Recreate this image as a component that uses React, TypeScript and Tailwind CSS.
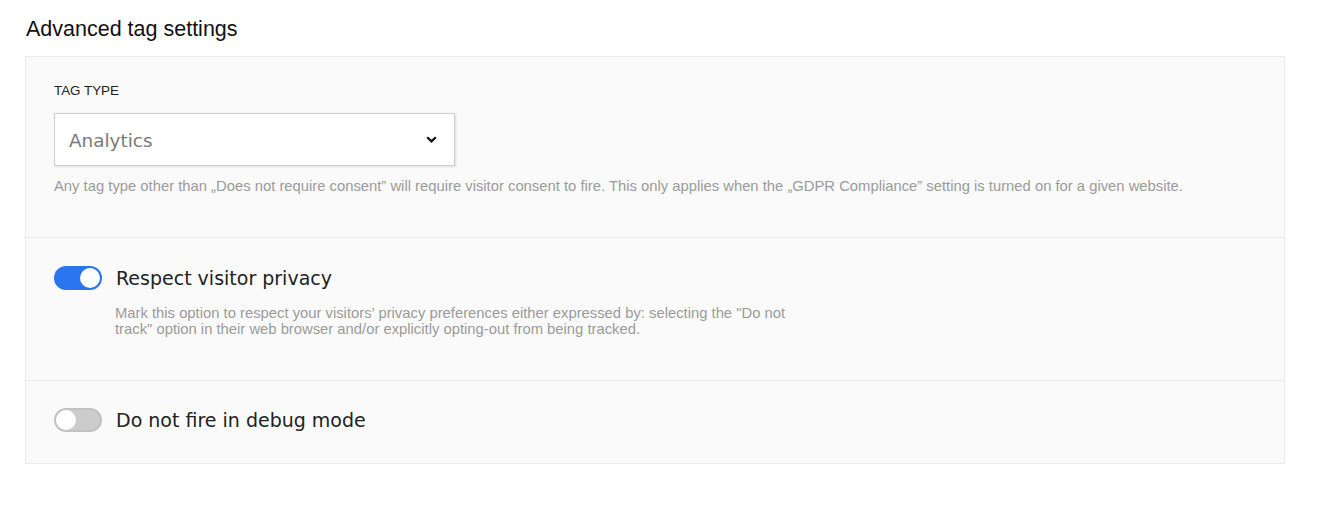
import React from "react";

function Toggle({ on }: { on: boolean }) {
  return on ? (
    <div className="w-[48px] h-[24px] rounded-full bg-[#2a74ee] p-[2px] flex justify-end shrink-0">
      <div className="w-[20px] h-[20px] rounded-full bg-white" />
    </div>
  ) : (
    <div className="w-[48px] h-[24px] rounded-full bg-[#cccccc] border-2 border-[#c2c2c2] flex justify-start shrink-0">
      <div className="w-[20px] h-[20px] rounded-full bg-white" />
    </div>
  );
}

export default function App() {
  return (
    <div className="bg-white w-[1318px] h-[529px] font-['Liberation_Sans',Arial,sans-serif]">
      <div className="pl-[25px] pt-[17px]">
        <h2 className="text-[21.5px] leading-[24px] text-[#111] pl-[1px]">Advanced tag settings</h2>
        <div className="mt-[15px] w-[1260px] border border-[#ececec] bg-[#fafafa]">
          <div className="px-[28px] pt-[27px] pb-[42px] border-b border-[#ececec]">
            <div className="text-[13.4px] leading-[14px] text-[#222] uppercase">Tag type</div>
            <div className="mt-[15px] w-[401px] h-[53px] bg-white border border-[#cfcfcf] shadow-[1px_1px_2px_rgba(0,0,0,0.12)] flex items-center justify-between pl-[14px] pr-[17px]">
              <span className="text-[18.4px] text-[#7a7a7a] font-['DejaVu_Sans',sans-serif] pt-[2px]">Analytics</span>
              <svg width="11" height="7" viewBox="0 0 11 7">
                <path d="M1.2 1.2 L5.5 5.4 L9.8 1.2" fill="none" stroke="#111" strokeWidth="2.2" />
              </svg>
            </div>
            <p className="mt-[11px] text-[14.8px] leading-[18px] text-[#9a9a9a] whitespace-nowrap">
              Any tag type other than „Does not require consent” will require visitor consent to fire. This only applies when the „GDPR Compliance” setting is turned on for a given website.
            </p>
          </div>
          <div className="px-[28px] pt-[28px] pb-[43px] border-b border-[#ececec]">
            <div className="flex items-center gap-[14px]">
              <Toggle on={true} />
              <span className="text-[19px] leading-[24px] text-[#222] font-['DejaVu_Sans',sans-serif]">Respect visitor privacy</span>
            </div>
            <p className="mt-[15px] ml-[61px] w-[690px] text-[14.8px] leading-[16px] text-[#9a9a9a]">
              Mark this option to respect your visitors’ privacy preferences either expressed by: selecting the "Do not track" option in their web browser and/or explicitly opting-out from being tracked.
            </p>
          </div>
          <div className="px-[28px] pt-[27px] pb-[31px]">
            <div className="flex items-center gap-[14px]">
              <Toggle on={false} />
              <span className="text-[19px] leading-[24px] text-[#222] font-['DejaVu_Sans',sans-serif]">Do not fire in debug mode</span>
            </div>
          </div>
        </div>
      </div>
    </div>
  );
}
